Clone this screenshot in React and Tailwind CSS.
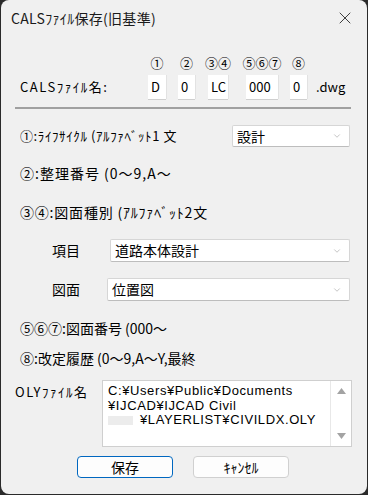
import { X, ChevronDown } from 'lucide-react'

const jp = { fontFamily: '"Noto Sans CJK JP", "Liberation Sans", sans-serif' }

function CodeBox({ value, width }) {
  return (
    <div className={`${width} h-[24px] bg-white shadow-[0_1px_0_#cfcfcf,1px_0_0_#e2e2e2] flex items-center pl-[3px] text-[13px] text-black`}>
      {value}
    </div>
  )
}

function CodeCol({ num, value, width }) {
  return (
    <div className={`${width} flex flex-col items-center`}>
      <div className="h-[16px] text-[13px] leading-[16px] whitespace-nowrap">{num}</div>
      <div className="mt-[4px]"><CodeBox value={value} width={width} /></div>
    </div>
  )
}

function SelectBox({ value, className }) {
  return (
    <div className={`${className} bg-white border border-[#d6d6d6] border-b-[#bdbdbd] rounded-[2px] flex items-center pl-[4px] pr-[7px] text-[14px] text-black`}>
      <span className="flex-1">{value}</span>
      <ChevronDown className="h-[10px] w-[10px] text-[#8a8a8a]" strokeWidth={1.2} />
    </div>
  )
}

export default function App() {
  return (
    <div className="w-[368px] h-[495px] bg-[#2a2a2a] pb-px px-px" style={jp}>
      <div className="h-full bg-[#f0f0f0] rounded-[8px] overflow-hidden text-black">
        <div className="h-[36px] flex items-center pl-[10px] pr-[12px]">
          <span className="flex-1 text-[14px] tracking-[0.3px] text-[#1b1b1b]">CALSﾌｧｲﾙ保存(旧基準)</span>
          <X className="h-[20px] w-[20px] text-[#1b1b1b]" strokeWidth={1} />
        </div>

        <div className="mt-[19px] flex">
          <div className="w-[128px] flex flex-col">
            <div className="h-[16px]" />
            <div className="mt-[4px] h-[24px] flex items-center pl-[19px] text-[13px] tracking-[1.5px] whitespace-nowrap">CALSﾌｧｲﾙ名:</div>
          </div>
          <div className="ml-[19px] flex">
            <CodeCol num="①" value="D" width="w-[18px]" />
            <div className="ml-[12px]"><CodeCol num="②" value="0" width="w-[17px]" /></div>
            <div className="ml-[13px]"><CodeCol num="③④" value="LC" width="w-[20px]" /></div>
            <div className="ml-[18px]"><CodeCol num="⑤⑥⑦" value="000" width="w-[32px]" /></div>
            <div className="ml-[12px]"><CodeCol num="⑧" value="0" width="w-[17px]" /></div>
          </div>
          <div className="ml-[9px] mt-[20px] h-[24px] flex items-center text-[13px]">.dwg</div>
        </div>

        <div className="mt-[8px] ml-[14px] w-[336px] h-[2px] bg-[#a0a0a0]" />

        <div className="mt-[16px] h-[22px] flex items-center pl-[19px]">
          <span className="w-[212px] text-[13px] tracking-[0.6px] whitespace-nowrap overflow-hidden">①:ﾗｲﾌｻｲｸﾙ (ｱﾙﾌｧﾍﾞｯﾄ1 文</span>
          <SelectBox value="設計" className="w-[118px] h-[22px]" />
        </div>

        <div className="mt-[16px] h-[20px] flex items-center pl-[19px] text-[14px] tracking-[1px] whitespace-nowrap">②:整理番号 (0～9,A～</div>

        <div className="mt-[19px] h-[20px] flex items-center pl-[19px] text-[14px] tracking-[0.8px] whitespace-nowrap">③④:図面種別 (ｱﾙﾌｧﾍﾞｯﾄ2文</div>

        <div className="mt-[17px] h-[23px] flex items-center">
          <span className="ml-[51px] w-[58px] text-[14px]">項目</span>
          <SelectBox value="道路本体設計" className="w-[240px] h-[23px]" />
        </div>

        <div className="mt-[16px] h-[23px] flex items-center">
          <span className="ml-[51px] w-[55px] text-[14px]">図面</span>
          <SelectBox value="位置図" className="w-[243px] h-[23px]" />
        </div>

        <div className="mt-[17px] h-[20px] flex items-center pl-[19px] text-[14px] whitespace-nowrap">⑤⑥⑦:図面番号 (000～</div>

        <div className="mt-[10px] h-[20px] flex items-center pl-[19px] text-[14px] whitespace-nowrap">⑧:改定履歴 (0～9,A～Y,最終</div>

        <div className="mt-[12px] flex">
          <span className="ml-[14px] w-[87px] pt-[4px] text-[13px] leading-[15px] tracking-[1.5px] whitespace-nowrap">OLYﾌｧｲﾙ名</span>
          <div className="w-[250px] h-[67px] bg-white border border-[#cfcfcf] flex">
            <div className="flex-1 pl-[5px] pt-[3px] text-[13px] leading-[14.5px] tracking-[0.6px] whitespace-nowrap" style={{ fontFamily: '"Liberation Sans", "Noto Sans CJK JP", sans-serif' }}>
              <div>C:¥Users¥Public¥Documents</div>
              <div>¥IJCAD¥IJCAD Civil</div>
              <div className="flex items-center">
                <span className="inline-block w-[25px] h-[9px] bg-[#ececec] mr-[7px]" />
                <span>¥LAYERLIST¥CIVILDX.OLY</span>
              </div>
            </div>
            <div className="w-[21px] border-l border-[#e8e8e8] flex flex-col items-center justify-between py-[7px]">
              <svg width="9" height="6" viewBox="0 0 9 6"><path d="M4.5 0L9 6H0z" fill="#a3a3a3" /></svg>
              <svg width="9" height="6" viewBox="0 0 9 6"><path d="M0 0h9L4.5 6z" fill="#a3a3a3" /></svg>
            </div>
          </div>
        </div>

        <div className="mt-[9px] flex gap-[20px] pl-[76px]">
          <button className="w-[96px] h-[22px] rounded-[4px] border border-[#0067c0] bg-[#fdfdfd] text-[14px] flex items-center justify-center">保存</button>
          <button className="w-[96px] h-[22px] rounded-[4px] border border-[#d0d0d0] bg-[#fdfdfd] text-[14px] flex items-center justify-center">ｷｬﾝｾﾙ</button>
        </div>
      </div>
    </div>
  )
}
